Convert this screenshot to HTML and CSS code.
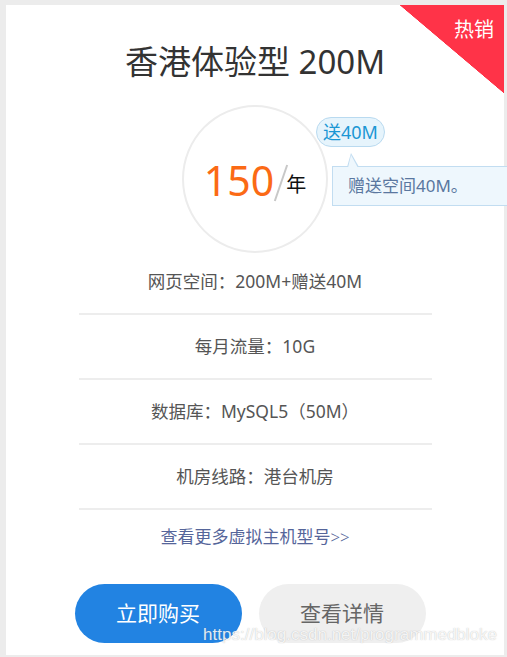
FILE: index.html
```html
<!DOCTYPE html>
<html lang="zh">
<head>
<meta charset="utf-8">
<title>香港体验型 200M</title>
<link rel="stylesheet" href="styles.css">
</head>
<body>
<div class="card">
  <div class="hot"><span class="hot-text">热销</span></div>
  <h1 class="title">香港体验型 200M</h1>
  <div class="price-area">
    <div class="circle">
      <span class="price">150</span><span class="slash"></span><span class="unit">年</span>
    </div>
    <span class="badge">送40M</span>
    <div class="tip">赠送空间40M。</div>
  </div>
  <ul class="features">
    <li>网页空间：200M+赠送40M</li>
    <li>每月流量：10G</li>
    <li>数据库：MySQL5（50M）</li>
    <li>机房线路：港台机房</li>
  </ul>
  <a class="more" href="#">查看更多虚拟主机型号&gt;&gt;</a>
  <div class="actions">
    <a class="btn btn-buy" href="#">立即购买</a>
    <a class="btn btn-detail" href="#">查看详情</a>
  </div>
  <span class="watermark">https://blog.csdn.net/programmedbloke</span>
</div>
</body>
</html>
```
FILE: styles.css
```css
html, body {
  margin: 0;
  padding: 0;
  overflow: hidden;
}
body {
  background: #ececec;
  font-family: "Noto Sans", "Noto Sans CJK SC", sans-serif;
  width: 507px;
  height: 657px;
}
.card {
  position: relative;
  margin: 5px 3px 0 6px;
  height: 650px;
  background: #fff;
  display: flex;
  flex-direction: column;
  align-items: center;
}
.hot {
  position: absolute;
  top: 0;
  right: 0;
  width: 104px;
  height: 88px;
  background: linear-gradient(to bottom left, #ff3348 50%, transparent 50.4%);
}
.hot-text {
  position: absolute;
  top: 12px;
  right: 10px;
  color: #fff;
  font-size: 20px;
  line-height: 26px;
}
.title {
  margin: 36px 0 0;
  font-size: 33px;
  font-weight: normal;
  line-height: 42px;
  color: #333;
}
.price-area {
  position: relative;
  margin-top: 22px;
}
.circle {
  width: 142px;
  height: 142px;
  border: 2px solid #ececec;
  border-radius: 50%;
  display: flex;
  align-items: center;
  justify-content: center;
  padding-top: 2px;
  box-sizing: content-box;
}
.price {
  font-size: 41px;
  line-height: 44px;
  color: #fb6a15;
}
.slash {
  display: inline-block;
  width: 2px;
  height: 38px;
  background: #c8c8c8;
  transform: rotate(19deg);
  margin: 6px 4px 0 6px;
}
.unit {
  font-size: 20px;
  line-height: 24px;
  color: #111;
  margin-top: 10px;
}
.badge {
  position: absolute;
  left: 134px;
  top: 12px;
  height: 28px;
  padding: 0 6px;
  border: 1px solid #b9daf0;
  border-radius: 15px;
  background: #e6f4fc;
  color: #1b97d4;
  font-size: 18px;
  line-height: 28px;
  white-space: nowrap;
}
.tip {
  position: absolute;
  left: 150px;
  top: 61px;
  width: 178px;
  height: 38px;
  padding-left: 15px;
  border: 1px solid #c2ddf1;
  background: #eef7fd;
  color: #5a77a0;
  font-size: 17px;
  line-height: 38px;
  white-space: nowrap;
  box-sizing: content-box;
}
.tip::before,
.tip::after {
  content: "";
  position: absolute;
  left: 14px;
  border-style: solid;
  border-color: transparent;
}
.tip::before {
  top: -14px;
  border-width: 0 8px 14px 4px;
  border-bottom-color: #c2ddf1;
}
.tip::after {
  top: -12px;
  left: 15px;
  border-width: 0 7px 13px 3px;
  border-bottom-color: #eef7fd;
}
.features {
  list-style: none;
  margin: -3px 0 0;
  padding: 0;
  width: 353px;
}
.features li {
  height: 63px;
  line-height: 63px;
  border-bottom: 2px solid #ededed;
  text-align: center;
  font-size: 17.5px;
  color: #555;
}
.more {
  display: block;
  height: 56px;
  line-height: 56px;
  font-family: "Liberation Serif", "Noto Sans CJK SC", serif;
  font-size: 17px;
  color: #55659a;
  text-decoration: none;
}
.actions {
  display: flex;
  gap: 17px;
  margin-top: 18px;
  padding-right: 10px;
}
.btn {
  display: block;
  width: 167px;
  height: 59px;
  border-radius: 30px;
  text-align: center;
  line-height: 59px;
  font-size: 21px;
  text-decoration: none;
}
.btn-buy {
  background: #2283e2;
  color: #fff;
}
.btn-detail {
  background: #efefef;
  color: #666;
}
.watermark {
  position: absolute;
  right: 7px;
  bottom: 10px;
  font-family: "Liberation Sans", sans-serif;
  font-size: 17px;
  line-height: 20px;
  color: rgba(255, 255, 255, 0.85);
  text-shadow: 0 0 1px rgba(120, 120, 120, 0.5);
}
```
